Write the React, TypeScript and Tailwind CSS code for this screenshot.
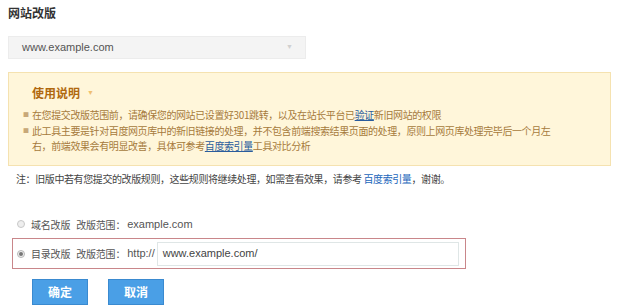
import React from 'react';

const cjk = '"Noto Sans CJK SC", "Liberation Sans", sans-serif';

const App = () => {
  return (
    <div
      className="w-[620px] h-[308px] bg-white overflow-hidden text-[11px] text-[#333]"
      style={{ fontFamily: '"Liberation Sans", Arial, "Noto Sans CJK SC", sans-serif' }}
    >
      <div className="pl-[8px] pt-[5px]">
        <h2 className="text-[12px] font-bold text-[#333] leading-[16px]" style={{ fontFamily: cjk }}>
          网站改版
        </h2>

        <div className="mt-[15px] w-[298px] h-[23px] bg-[#f4f4f4] border border-[#ececec] flex items-center justify-between pl-[13px] pr-[12px]">
          <span className="text-[11px] text-[#555]">www.example.com</span>
          <span className="text-[7px] text-[#d0d0d0]">▼</span>
        </div>

        <div className="mt-[13px] w-[603px] h-[94px] bg-[#fff6da] border border-[#f5e2b0] pt-[11px]">
          <div className="flex items-center pl-[23px] h-[18px]">
            <span className="text-[12px] font-bold text-[#b0680e]" style={{ fontFamily: cjk }}>
              使用说明
            </span>
            <span className="ml-[7px] text-[7px] text-[#f0c070]">▼</span>
          </div>
          <ul
            className="mt-[5px] text-[10px] tracking-[-0.4px] text-[#a67a3c] leading-[15.5px] whitespace-nowrap"
            style={{ fontFamily: cjk }}
          >
            <li className="flex">
              <span className="w-[23px] shrink-0 pl-[14px] text-[6px] text-[#c8a878]">■</span>
              <span>
                在您提交改版范围前，请确保您的网站已设置好301跳转，以及在站长平台已
                <span className="text-[#2a5c9c] underline">验证</span>
                新旧网站的权限
              </span>
            </li>
            <li className="flex">
              <span className="w-[23px] shrink-0 pl-[14px] text-[6px] text-[#c8a878]">■</span>
              <span>
                此工具主要是针对百度网页库中的新旧链接的处理，并不包含前端搜索结果页面的处理，原则上网页库处理完毕后一个月左
                <br />
                右，前端效果会有明显改善，具体可参考
                <span className="text-[#2a5c9c] underline">百度索引量</span>
                工具对比分析
              </span>
            </li>
          </ul>
        </div>

        <p
          className="mt-[5px] pl-[8px] text-[10px] tracking-[-0.4px] text-[#444] leading-[16px] whitespace-nowrap"
          style={{ fontFamily: cjk }}
        >
          注：旧版中若有您提交的改版规则，这些规则将继续处理，如需查看效果，请参考{' '}
          <span className="text-[#2266bb]">百度索引量</span>，谢谢。
        </p>

        <div className="mt-[29px] pl-[9px] flex items-center h-[16px] text-[11px] text-[#555] whitespace-nowrap">
          <span className="w-[8px] h-[8px] shrink-0 rounded-full border border-[#c8c8c8] bg-[#eeeeee]" />
          <span className="ml-[6px] text-[10px] tracking-[-0.2px]" style={{ fontFamily: cjk }}>域名改版</span>
          <span className="ml-[6px] text-[10px] tracking-[-0.2px]" style={{ fontFamily: cjk }}>改版范围：</span>
          <span className="ml-[2px]">example.com</span>
        </div>

        <div className="mt-[6px] ml-[4px] w-[454px] h-[31px] border border-[#c9868a] flex items-center pl-[4px] text-[11px] text-[#555] whitespace-nowrap">
          <span className="w-[8px] h-[8px] shrink-0 rounded-full border border-[#b8b8b8] bg-[#eeeeee] flex items-center justify-center">
            <span className="w-[4px] h-[4px] rounded-full bg-[#777]" />
          </span>
          <span className="ml-[6px] text-[10px] tracking-[-0.2px]" style={{ fontFamily: cjk }}>目录改版</span>
          <span className="ml-[6px] text-[10px] tracking-[-0.2px]" style={{ fontFamily: cjk }}>改版范围：</span>
          <span className="ml-[2px]">http://</span>
          <div className="ml-[2px] w-[302px] h-[24px] shrink-0 border border-[#dfe6e6] flex items-center pl-[5px] text-[#444]">
            www.example.com/
          </div>
        </div>

        <div className="mt-[10px] ml-[24px] flex gap-[20px]">
          <button
            className="w-[56px] h-[26px] bg-[#4a9fe6] border border-[#3a8ad0] text-white text-[12px] font-bold"
            style={{ fontFamily: cjk }}
          >
            确定
          </button>
          <button
            className="w-[56px] h-[26px] bg-[#4a9fe6] border border-[#3a8ad0] text-white text-[12px] font-bold"
            style={{ fontFamily: cjk }}
          >
            取消
          </button>
        </div>
      </div>
    </div>
  );
};

export default App;
